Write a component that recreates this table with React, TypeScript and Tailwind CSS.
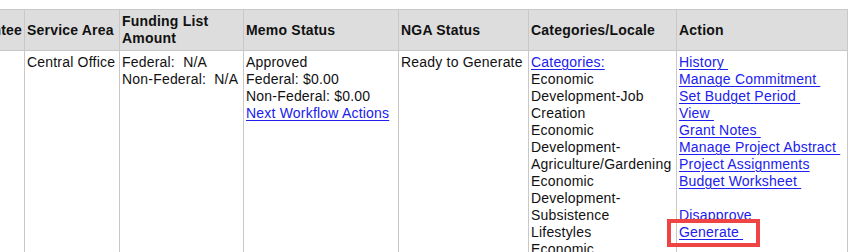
import React from "react";

const headers = [
  "Grantee",
  "Service Area",
  "Funding List Amount",
  "Memo Status",
  "NGA Status",
  "Categories/Locale",
  "Action",
];

const categoryLines = [
  "Economic",
  "Development-Job",
  "Creation",
  "Economic",
  "Development-",
  "Agriculture/Gardening",
  "Economic",
  "Development-",
  "Subsistence",
  "Lifestyles",
  "Economic",
  "Development-",
  "Tourism",
];

const actions: (string | null)[] = [
  "History\u00a0",
  "Manage Commitment\u00a0",
  "Set Budget Period\u00a0",
  "View\u00a0",
  "Grant Notes\u00a0",
  "Manage Project Abstract\u00a0",
  "Project Assignments",
  "Budget Worksheet\u00a0",
  null,
  "Disapprove",
];

function Link({ children }: { children: React.ReactNode }) {
  return (
    <a href="#" className="text-[#2020ee] underline underline-offset-[2px] decoration-[1px]">
      {children}
    </a>
  );
}

export default function App() {
  const cell = "border-r border-b border-[#c8c8c8] px-[2px] pt-[3px] pb-[3px]";
  return (
    <div
      className="w-[858px] h-[252px] overflow-hidden bg-white text-[14px] leading-[17px] tracking-[0.2px] text-[#111]"
      style={{ fontFamily: '"Liberation Sans", Arial, sans-serif' }}
    >
      <div className="mt-[9px] ml-[-36px] grid grid-cols-[60px_95px_124px_155px_130px_148px_171px] w-max border-l border-t border-[#c8c8c8]">
        {headers.map((h, i) => (
          <div
            key={h}
            className={`${cell} bg-[#dddddd] font-bold flex items-center ${i === 0 ? "justify-end pr-[2px]" : ""}`}
          >
            {h === "Funding List Amount" ? (
              <span>
                Funding List
                <br />
                Amount
              </span>
            ) : (
              <span className="whitespace-nowrap">{h}</span>
            )}
          </div>
        ))}

        <div className={cell}></div>
        <div className={`${cell} whitespace-nowrap`}>Central Office</div>
        <div className={`${cell} whitespace-pre`}>
          <div>Federal:  N/A</div>
          <div>Non-Federal:  N/A</div>
        </div>
        <div className={`${cell} whitespace-nowrap`}>
          <div>Approved</div>
          <div>Federal: $0.00</div>
          <div>Non-Federal: $0.00</div>
          <div>
            <Link>Next Workflow Actions</Link>
          </div>
        </div>
        <div className={`${cell} whitespace-nowrap`}>Ready to Generate</div>
        <div className={`${cell} whitespace-nowrap`}>
          <div>
            <Link>Categories:</Link>
          </div>
          {categoryLines.map((l, i) => (
            <div key={i}>{l}</div>
          ))}
        </div>
        <div className={`${cell} whitespace-nowrap`}>
          {actions.map((a, i) => (
            <div key={i} className="h-[17px]">
              {a ? <Link>{a}</Link> : null}
            </div>
          ))}
          <div className="relative">
            <Link>Generate{"\u00a0"}</Link>
            <span className="pointer-events-none absolute left-[-12px] top-[-5px] w-[93px] h-[28px] border-[4px] border-[#ef4444]"></span>
          </div>
        </div>
      </div>
    </div>
  );
}
